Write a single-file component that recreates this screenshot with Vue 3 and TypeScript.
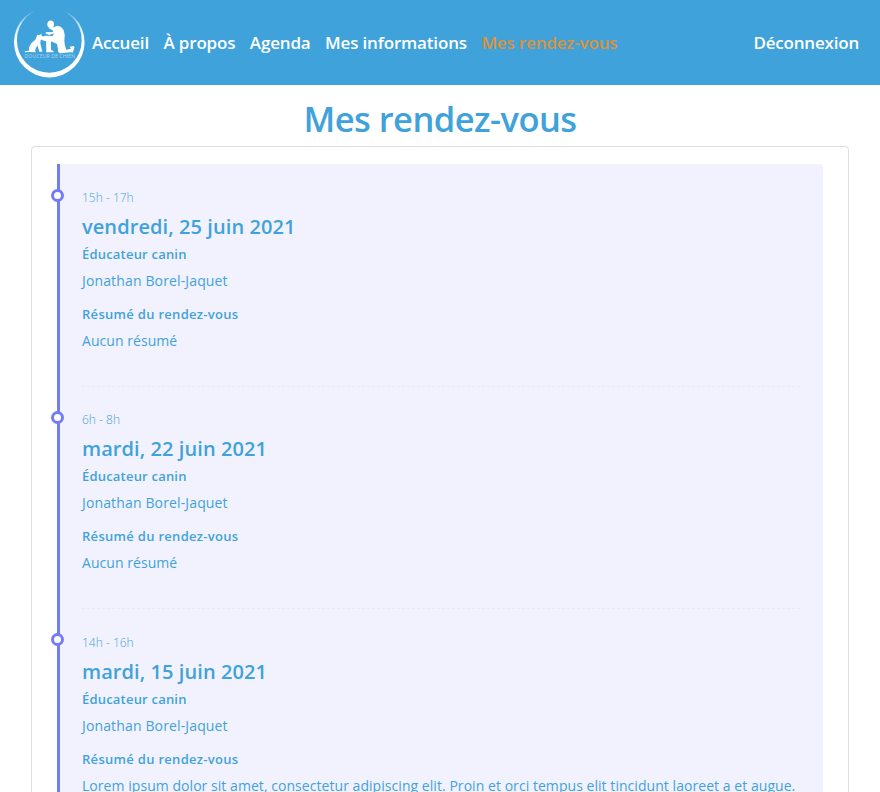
<script setup lang="ts">
interface Appointment {
  hours: string
  date: string
  trainer: string
  summary: string
}

const links: string[] = ['Accueil', 'À propos', 'Agenda', 'Mes informations', 'Mes rendez-vous']
const active = 'Mes rendez-vous'

const appointments: Appointment[] = [
  { hours: '15h - 17h', date: 'vendredi, 25 juin 2021', trainer: 'Jonathan Borel-Jaquet', summary: 'Aucun résumé' },
  { hours: '6h - 8h', date: 'mardi, 22 juin 2021', trainer: 'Jonathan Borel-Jaquet', summary: 'Aucun résumé' },
  {
    hours: '14h - 16h',
    date: 'mardi, 15 juin 2021',
    trainer: 'Jonathan Borel-Jaquet',
    summary: 'Lorem ipsum dolor sit amet, consectetur adipiscing elit. Proin et orci tempus elit tincidunt laoreet a et augue.',
  },
]
</script>

<template>
  <div class="page">
    <nav class="navbar">
      <svg class="logo" viewBox="0 0 74 74" width="74" height="74">
        <defs>
          <linearGradient id="ring" x1="0" y1="0" x2="0" y2="1">
            <stop offset="0.04" stop-color="#fff" stop-opacity="0" />
            <stop offset="0.22" stop-color="#fff" stop-opacity="0.6" />
            <stop offset="0.45" stop-color="#fff" />
          </linearGradient>
        </defs>
        <path
          fill="url(#ring)"
          fill-rule="evenodd"
          d="M37.300 0a35.300 35.200 0 1 0 0 70.400a35.300 35.200 0 1 0 0-70.400zM37.300 0.700a32.400 32.500 0 1 1 0 65a32.400 32.500 0 1 1 0-65z"
        />
        <g fill="#fff" transform="translate(-12 -7) scale(0.3333)">
          <ellipse cx="152" cy="73" rx="10" ry="11.500" />
          <path d="M145 84L160 82L172 77Q184 78 191 91Q197 106 193 122Q193 135 199 149L213 146L209 140L220 138L224 142L218 158L212 157L180 160Q173 158 174 148L171 132L153 124L153 149L161 154L160 157L138 157L139 152L138 124L127 121L127 111L135 107L158 108L162 100L147 105L136 100L138 97L160 96L157 90Z" />
          <path d="M112 104L117 106L124 101L125 107L132 111L130 118L122 120L121 130L126 151L127 155L118 155L112 136L105 151L108 157L88 156L75 157L74 154L87 152Q86 139 94 130L107 118Z" />
        </g>
        <text x="12.500" y="51" class="logo-text" textLength="50.500" lengthAdjust="spacingAndGlyphs">DOUCEUR DE CHIEN</text>
      </svg>
      <div class="links">
        <a v-for="link in links" :key="link" class="link" :class="{ active: link === active }">{{ link }}</a>
      </div>
      <a class="link logout">Déconnexion</a>
    </nav>
    <h1 class="title">Mes rendez-vous</h1>
    <section class="card">
      <ul class="timeline">
        <li v-for="item in appointments" :key="item.date" class="event">
          <p class="hours">{{ item.hours }}</p>
          <h2 class="date">{{ item.date }}</h2>
          <h3 class="label first">Éducateur canin</h3>
          <p class="text trainer">{{ item.trainer }}</p>
          <h3 class="label">Résumé du rendez-vous</h3>
          <p class="text">{{ item.summary }}</p>
        </li>
      </ul>
    </section>
  </div>
</template>

<style>
body {
  background: #fff;
  overflow: hidden;
}
</style>

<style scoped>
.page {
  height: 792px;
  overflow: hidden;
  font-family: 'Open Sans', 'Noto Sans', sans-serif;
  color: #3fa2da;
}
.navbar {
  display: flex;
  align-items: center;
  box-sizing: border-box;
  height: 85px;
  padding: 0 21px 0 12px;
  background: #3fa2da;
}
.logo {
  flex: none;
  margin-top: 3px;
}
.logo-text {
  font-family: 'Open Sans', sans-serif;
  font-size: 5px;
  fill: #fff;
  fill-opacity: 0.55;
}
.links {
  display: flex;
  gap: 14.5px;
  margin-left: 6px;
}
.link {
  font-size: 17px;
  font-weight: 600;
  line-height: 26px;
  letter-spacing: -0.17px;
  color: #fff;
  white-space: nowrap;
}
.link.active {
  color: #dc9239;
}
.logout {
  margin-left: auto;
  letter-spacing: -0.2px;
}
.title {
  margin: 0;
  padding-top: 12px;
  height: 49px;
  line-height: 43px;
  font-size: 34.5px;
  font-weight: 600;
  letter-spacing: -0.55px;
  text-align: center;
}
.card {
  box-sizing: border-box;
  height: 900px;
  margin: 0 31px;
  padding: 17px 25px;
  border: 1px solid #dfdfdf;
  border-radius: 4px;
}
.timeline {
  margin: 0;
  padding: 23px 23px 0 22px;
  height: 800px;
  border-left: 3px solid #727cf5;
  border-radius: 0 4px 4px 0;
  background: #f2f2fe;
  list-style: none;
}
.event {
  position: relative;
  height: 199px;
  margin-bottom: 22.4px;
  border-bottom: 1px dashed #e8ebf1;
}
.event::before {
  content: '';
  position: absolute;
  left: -31px;
  top: 1.5px;
  box-sizing: border-box;
  width: 13px;
  height: 13px;
  border: 3px solid #727cf5;
  border-radius: 50%;
  background: #fff;
}
.hours,
.date,
.label,
.text {
  margin: 0;
  white-space: nowrap;
}
.hours {
  font-size: 12px;
  font-weight: 300;
  line-height: 21px;
}
.date {
  font-size: 20px;
  font-weight: 600;
  line-height: 37px;
  letter-spacing: 0.08px;
}
.label {
  font-size: 13px;
  font-weight: 600;
  line-height: 30px;
  letter-spacing: 0.3px;
}
.label.first {
  line-height: 18px;
  letter-spacing: 0.2px;
}
.text {
  font-size: 14px;
  font-weight: 400;
  line-height: 24px;
  letter-spacing: 0.05px;
}
.text.trainer {
  line-height: 36px;
  letter-spacing: 0.14px;
}
</style>
